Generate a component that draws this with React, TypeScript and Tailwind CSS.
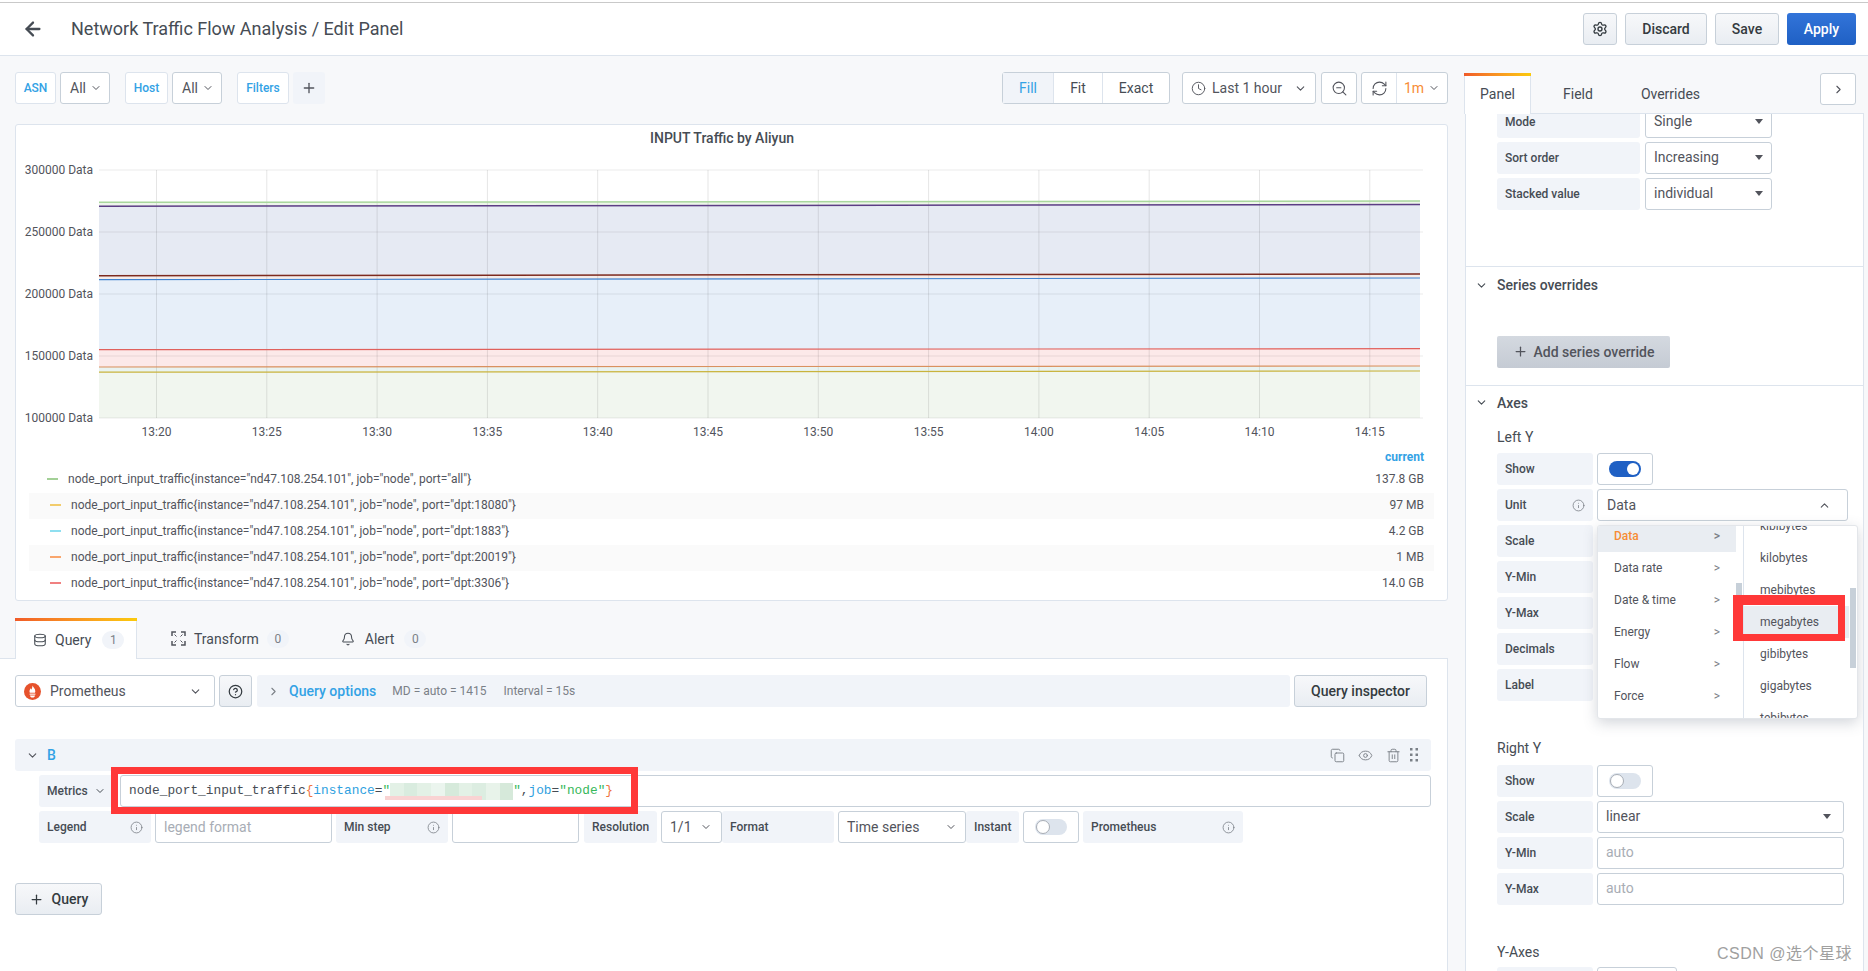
import React from 'react'
import { ArrowLeft, Settings, ChevronDown, ChevronRight, ChevronUp, Clock, ZoomOut, RefreshCw, Plus, Database, Bell, Copy, Eye, Trash2, Info, CircleHelp } from 'lucide-react'

const times = ['13:20', '13:25', '13:30', '13:35', '13:40', '13:45', '13:50', '13:55', '14:00', '14:05', '14:10', '14:15']
const ticks = [
  { y: 170, t: '300000 Data' },
  { y: 232, t: '250000 Data' },
  { y: 294, t: '200000 Data' },
  { y: 356, t: '150000 Data' },
  { y: 418, t: '100000 Data' },
]
const legend = [
  { c: 'bg-[#a3d097]', port: 'all', v: '137.8 GB' },
  { c: 'bg-[#f2cc6c]', port: 'dpt:18080', v: '97 MB' },
  { c: 'bg-[#8fdff0]', port: 'dpt:1883', v: '4.2 GB' },
  { c: 'bg-[#f9a66d]', port: 'dpt:20019', v: '1 MB' },
  { c: 'bg-[#f08080]', port: 'dpt:3306', v: '14.0 GB' },
]
const lines = [
  { a: 202.3, b: 201, c: '#a9d79d', w: 1.5 },
  { a: 206.3, b: 204.5, c: '#5c3d84', w: 1.5 },
  { a: 275.7, b: 274, c: '#7d2a1e', w: 1.5 },
  { a: 279.7, b: 278, c: '#3f82cf', w: 1.2 },
  { a: 349.7, b: 348.7, c: '#e0605c', w: 1.2 },
  { a: 367, b: 366, c: '#d9915f', w: 1.2 },
  { a: 372.2, b: 371, c: '#c9b33c', w: 1.2 },
]
const fills = [
  { a: 202.3, b: 201, a2: 206.3, b2: 204.5, c: '#edf5ea' },
  { a: 206.3, b: 204.5, a2: 275.7, b2: 274, c: '#e6eaf3' },
  { a: 275.7, b: 274, a2: 279.7, b2: 278, c: '#f5ece9' },
  { a: 279.7, b: 278, a2: 349.7, b2: 348.7, c: '#e7eff9' },
  { a: 349.7, b: 348.7, a2: 367, b2: 366, c: '#fce9e9' },
  { a: 367, b: 366, a2: 372.2, b2: 371, c: '#e9f3f1' },
  { a: 372.2, b: 371, a2: 418, b2: 418, c: '#f1f6ef' },
]
const units = [
  { t: 'Data', active: true },
  { t: 'Data rate' },
  { t: 'Date & time' },
  { t: 'Energy' },
  { t: 'Flow' },
  { t: 'Force' },
]
const sizes = ['kilobytes', 'mebibytes', 'megabytes', 'gibibytes', 'gigabytes']
const blur = ['#e3f1e6', '#d9ecdf', '#e3f1e6', '#ebf5ee', '#d6eadb', '#e3f1e6', '#dcede1', '#e8f3ea', '#d6e9da']

const Label = ({ children, className = '' }: { children: React.ReactNode; className?: string }) => (
  <div className={`h-8 flex items-center bg-[#f1f4f9] rounded-[3px] text-xs font-medium text-[#464c54] shrink-0 ${className}`}>{children}</div>
)

const Hint = () => <Info size={13} strokeWidth={1.5} className="text-[#7b8087] shrink-0" />

const Box = ({ children, className = '' }: { children?: React.ReactNode; className?: string }) => (
  <div className={`h-8 flex items-center bg-white border border-[#c7d0d9] rounded-[3px] text-sm text-[#52545c] shrink-0 ${className}`}>{children}</div>
)

const Caret = () => <span className="w-0 h-0 border-x-[4px] border-x-transparent border-t-[5px] border-t-[#52545c] ml-auto mt-px" />

const Toggle = ({ on }: { on?: boolean }) => (
  <Box className="w-14 justify-center">
    {on ? (
      <span className="w-8 h-4 rounded-full bg-[#1f60c4] flex items-center justify-end pr-[2px]">
        <span className="w-3 h-3 rounded-full bg-white" />
      </span>
    ) : (
      <span className="w-8 h-4 rounded-full bg-[#dde4ed] flex items-center">
        <span className="w-[14px] h-[14px] ml-px rounded-full bg-white border border-[#a8adb5]" />
      </span>
    )}
  </Box>
)

const GrayButton = ({ children, className = '' }: { children: React.ReactNode; className?: string }) => (
  <button className={`h-8 flex items-center justify-center rounded-[3px] border border-[#c7d0d9] bg-linear-to-b from-[#f7f8fa] to-[#e9edf2] text-sm font-medium text-[#343b40] ${className}`}>{children}</button>
)

const Chip = ({ children, className = '' }: { children: React.ReactNode; className?: string }) => (
  <div className={`h-8 flex items-center justify-center bg-white border border-[#dde4ed] rounded-[3px] text-xs font-medium text-[#33a2e5] ${className}`}>{children}</div>
)

const Row = ({ label, children, hint }: { label: string; children: React.ReactNode; hint?: boolean }) => (
  <div className="flex gap-1">
    <Label className="w-24 pl-2 pr-2 justify-between">
      <span>{label}</span>
      {hint && <Hint />}
    </Label>
    {children}
  </div>
)

const PrometheusLogo = () => (
  <svg width="17" height="17" viewBox="0 0 17 17">
    <circle cx="8.5" cy="8.5" r="8.5" fill="#e6522c" />
    <path d="M8.6 2.6c.4 1.8 2.7 2.8 2.7 5.6 0 .5-.1 1-.4 1.6H5.9c-.3-.7-.5-1.2-.4-1.9.1-1 .9-1.5 1-2.6.6.4.8 1 .9 1.5.6-1 .9-2.6 1.2-4.2z" fill="#fff" />
    <rect x="5.6" y="10.6" width="5.8" height="1.1" fill="#fff" />
    <path d="M6 12.4h5c0 1.2-1.1 2.2-2.5 2.2S6 13.6 6 12.4z" fill="#fff" />
  </svg>
)

const TransformIcon = () => (
  <svg width="15" height="15" viewBox="0 0 15 15" fill="none" stroke="#52545c" strokeWidth="1.5">
    <path d="M1 5V1h4M10 1h4v4M14 10v4h-4M5 14H1v-4" />
    <path d="M3.5 3.5l2 2M11.5 3.5l-2 2M11.5 11.5l-2-2M3.5 11.5l2-2" strokeWidth="1" />
  </svg>
)

const GripDots = () => (
  <svg width="10" height="14" viewBox="0 0 10 14" fill="#7b8087">
    <rect x="1" y="0" width="2.5" height="2.5" />
    <rect x="6.5" y="0" width="2.5" height="2.5" />
    <rect x="1" y="5.5" width="2.5" height="2.5" />
    <rect x="6.5" y="5.5" width="2.5" height="2.5" />
    <rect x="1" y="11" width="2.5" height="2.5" />
    <rect x="6.5" y="11" width="2.5" height="2.5" />
  </svg>
)

const Badge = ({ n }: { n: number }) => (
  <span className="w-[22px] h-[18px] rounded-full bg-[#f1f4f9] flex items-center justify-center text-xs text-[#7b8087]">{n}</span>
)

const Graph = () => (
  <svg width="1431" height="296" className="block">
    <g transform="translate(-16,-151)">
      {fills.map((f, i) => (
        <polygon key={i} points={`99,${f.a} 1420,${f.b} 1420,${f.b2} 99,${f.a2}`} fill={f.c} />
      ))}
      {ticks.map(t => (
        <g key={t.y}>
          <line x1="99" x2="1423" y1={t.y} y2={t.y} stroke="#000" strokeOpacity="0.08" />
          <text x="93" y={t.y + 4} textAnchor="end" fontSize="12" fill="#52545c">{t.t}</text>
        </g>
      ))}
      {times.map((t, i) => (
        <g key={t}>
          <line x1={156.5 + i * 110.3} x2={156.5 + i * 110.3} y1="170" y2="418" stroke="#000" strokeOpacity="0.1" />
          <text x={156.5 + i * 110.3} y="436" textAnchor="middle" fontSize="12" fill="#52545c">{t}</text>
        </g>
      ))}
      {lines.map((l, i) => (
        <line key={i} x1="99" x2="1420" y1={l.a} y2={l.b} stroke={l.c} strokeWidth={l.w} />
      ))}
    </g>
  </svg>
)

const UnitDropdown = () => (
  <div className="absolute left-[100px] top-9 z-10 w-[261px] h-[194px] bg-white rounded-[3px] border border-[#e3e6ea] shadow-[0_4px_14px_rgba(80,90,110,0.25)] flex overflow-hidden text-xs text-[#52545c]">
    <div className="w-[138px] shrink-0 -mt-[6px]">
      {units.map(u => (
        <div key={u.t} className={`h-8 flex items-center justify-between pl-[16px] pr-4 ${u.active ? 'bg-[#e9edf2] text-[#f78c35] font-medium' : ''}`}>
          <span>{u.t}</span>
          <span className="text-[#7b8087]">&gt;</span>
        </div>
      ))}
    </div>
    <div className="w-[8px] shrink-0 border-r border-[#dde4ed] relative">
      <div className="absolute left-0 top-[57px] w-[6px] h-[48px] bg-[#c7d0d9]" />
    </div>
    <div className="flex-1 -mt-[16px] relative">
      <div className="h-8 flex items-center pl-4">kibibytes</div>
      {sizes.map(s => (
        <div key={s} className={`h-8 flex items-center pl-4 mr-[8px] ${s === 'megabytes' ? 'bg-[#e9edf2]' : ''}`}>{s}</div>
      ))}
      <div className="h-8 flex items-center pl-4">tebibytes</div>
      <div className="absolute right-[1px] top-[78px] w-[6px] h-[80px] bg-[#c7d0d9]" />
    </div>
    <div className="absolute left-[135px] top-[69px] w-[112px] h-[46px] border-[#ff3838] border-solid border-t-[10px] border-l-[10px] border-r-[7px] border-b-[7px]" />
  </div>
)

const QueryText = () => (
  <span className="font-[family-name:'Liberation_Mono',monospace] text-[12.8px] whitespace-pre text-[#464c54] flex items-center">
    node_port_input_traffic<span className="text-[#f0743e]">{'{'}</span>
    <span className="text-[#2f9fe0]">instance</span>=<span className="text-[#36b85a]">"</span>
    <span className="relative inline-flex w-[123px] h-[17px]">
      {blur.map((c, i) => (
        <span key={i} className="flex-1" style={{ backgroundColor: c }} />
      ))}
      <span className="absolute -left-[5px] bottom-0 w-[97px] h-[4px] bg-[#f9d3d3]" />
    </span>
    <span className="text-[#36b85a]">"</span>,<span className="text-[#2f9fe0]">job</span>=<span className="text-[#36b85a]">"node"</span>
    <span className="text-[#f0743e]">{'}'}</span>
  </span>
)

const App = () => {
  return (
    <div className="relative h-[971px] overflow-hidden bg-[#f7f8fa] font-[family-name:Roboto,sans-serif] text-[#52545c]">
      <header className="bg-white pt-[2px] border-b border-[#dde4ed]">
        <div className="h-[53px] border-t border-[#c9c9c9] flex items-center pl-[22px] pr-3">
          <ArrowLeft size={22} strokeWidth={2.5} className="text-[#464c54]" />
          <h1 className="ml-[27px] text-lg text-[#464c54]">Network Traffic Flow Analysis / Edit Panel</h1>
          <div className="ml-auto flex gap-2">
            <GrayButton className="w-[34px]"><Settings size={16} /></GrayButton>
            <GrayButton className="w-[82px]">Discard</GrayButton>
            <GrayButton className="w-[64px]">Save</GrayButton>
            <button className="w-[69px] h-8 rounded-[3px] bg-linear-to-b from-[#3274d9] to-[#1f60c4] text-sm font-medium text-white">Apply</button>
          </div>
        </div>
      </header>

      <div className="flex">
        <div className="w-[1465px] shrink-0">
          <div className="pl-[15px] pr-[17px]">
            <div className="pt-4 flex items-center">
              <Chip className="w-[41px]">ASN</Chip>
              <Box className="ml-1 w-[50px] pl-[9px] gap-1">All <ChevronDown size={12} /></Box>
              <Chip className="ml-[15px] w-[43px]">Host</Chip>
              <Box className="ml-1 w-[50px] pl-[9px] gap-1">All <ChevronDown size={12} /></Box>
              <Chip className="ml-[15px] w-[52px]">Filters</Chip>
              <div className="ml-1 w-8 h-8 flex items-center justify-center bg-[#f1f4f9] rounded-[3px]"><Plus size={16} /></div>

              <div className="ml-auto flex h-8 items-center border border-[#c7d0d9] rounded-[3px] bg-white text-sm text-[#464c54]">
                <span className="w-[51px] h-full flex items-center justify-center bg-[#f1f4f9] text-[#33a2e5] border-r border-[#dde4ed]">Fill</span>
                <span className="w-[49px] h-full flex items-center justify-center border-r border-[#dde4ed]">Fit</span>
                <span className="w-[66px] h-full flex items-center justify-center">Exact</span>
              </div>
              <Box className="ml-3 w-[134px] pl-2 gap-[6px] text-[#7b8087]"><Clock size={15} strokeWidth={1.5} /> Last 1 hour <ChevronDown size={13} className="ml-auto mr-2" /></Box>
              <Box className="ml-[5px] w-9 justify-center"><ZoomOut size={17} strokeWidth={1.5} /></Box>
              <div className="ml-1 flex h-8 items-center border border-[#c7d0d9] rounded-[3px] bg-white">
                <span className="w-[35px] h-full flex items-center justify-center border-r border-[#dde4ed]"><RefreshCw size={17} strokeWidth={1.5} /></span>
                <span className="w-[50px] flex items-center justify-center gap-1 text-sm text-[#f78c35]">1m <ChevronDown size={12} className="text-[#52545c]" /></span>
              </div>
            </div>

            <section className="mt-5 h-[477px] bg-white border border-[#dde4ed] rounded-[3px]">
              <div className="h-[26px] pr-[19px] flex items-center justify-center text-sm font-medium text-[#464c54]">INPUT Traffic by Aliyun</div>
              <Graph />
              <div className="ml-[13px] mr-[13px]">
                <div className="h-5 pr-[10px] text-right text-xs font-bold text-[#33a2e5] leading-5">current</div>
                {legend.map((l, i) => (
                  <div key={l.port} className={`h-[26px] flex items-center pr-[10px] pb-[2px] text-xs text-[#52545c] ${i % 2 ? 'bg-[#fafafa]' : ''} ${i === 0 ? 'pl-[18px] gap-[10px]' : 'pl-[21px] gap-[10px]'}`}>
                    <span className={`w-[11px] h-[2px] ${l.c}`} />
                    <span>node_port_input_traffic{'{'}instance="nd47.108.254.101", job="node", port="{l.port}"{'}'}</span>
                    <span className="ml-auto">{l.v}</span>
                  </div>
                ))}
              </div>
            </section>

            <div className="mt-[17px] flex items-stretch h-[41px] -mb-px relative z-10">
              <div className="w-[122px] h-[41px] bg-white border-x border-[#dde4ed] flex flex-col">
                <div className="h-[3px] -mx-px bg-linear-to-r from-[#f05a28] to-[#fbca0a]" />
                <div className="flex-1 flex items-center pl-[17px] gap-[8px] text-sm text-[#464c54]">
                  <Database size={14} strokeWidth={1.8} /> <span>Query</span> <span className="ml-[3px]"><Badge n={1} /></span>
                </div>
              </div>
              <div className="ml-[34px] flex items-center gap-[8px] text-sm text-[#464c54]">
                <TransformIcon /> <span>Transform</span> <Badge n={0} />
              </div>
              <div className="ml-[52px] flex items-center gap-[10px] text-sm text-[#464c54]">
                <Bell size={14} strokeWidth={1.8} /> <span>Alert</span> <Badge n={0} />
              </div>
            </div>
          </div>

          <section className="w-[1448px] h-[320px] bg-white border-t border-r border-[#dde4ed] pl-[15px] pr-[20px] pt-4">
            <div className="flex gap-1">
              <Box className="w-[200px] pl-2 pr-3 gap-[9px]"><PrometheusLogo /> Prometheus <ChevronDown size={13} className="ml-auto" /></Box>
              <GrayButton className="w-[33px]"><CircleHelp size={15} /></GrayButton>
              <div className="ml-px flex-1 h-8 flex items-center bg-[#f1f4f9] rounded-[3px] pl-[10px] text-xs text-[#7b8087]">
                <ChevronRight size={13} />
                <span className="ml-[9px] text-sm font-medium text-[#33a2e5]">Query options</span>
                <span className="ml-4">MD = auto = 1415</span>
                <span className="ml-[17px]">Interval = 15s</span>
              </div>
              <GrayButton className="w-[133px]">Query inspector</GrayButton>
            </div>

            <div className="mt-8 w-[1416px] h-8 flex items-center bg-[#f1f4f9] rounded-[3px] pl-[11px] pr-3">
              <ChevronDown size={13} />
              <span className="ml-2 text-sm font-medium text-[#33a2e5]">B</span>
              <div className="ml-auto flex items-center gap-[13px] text-[#7b8087]">
                <Copy size={15} strokeWidth={1.5} />
                <Eye size={15} strokeWidth={1.5} />
                <Trash2 size={15} strokeWidth={1.5} />
                <span className="-ml-[5px]"><GripDots /></span>
              </div>
            </div>

            <div className="mt-1 ml-[24px] w-[1392px] flex">
              <Label className="w-[79px] pl-2 gap-[6px]">Metrics <ChevronDown size={12} /></Label>
              <div className="relative ml-[2px] flex-1">
                <Box className="pl-[8px]"><QueryText /></Box>
                <div className="absolute -left-[9px] -top-2 w-[527px] h-[47px] border-[7px] border-[#ff3838] pointer-events-none" />
              </div>
            </div>

            <div className="mt-1 ml-[24px] flex items-center">
              <Label className="w-[112px] px-2 justify-between">Legend <Hint /></Label>
              <Box className="ml-1 w-[177px] pl-2 text-[#a8adb5]">legend format</Box>
              <Label className="ml-1 w-[112px] px-2 justify-between">Min step <Hint /></Label>
              <Box className="ml-1 w-[127px]" />
              <Label className="ml-[5px] w-[73px] px-2">Resolution</Label>
              <Box className="ml-1 w-[61px] pl-2 gap-2">1/1 <ChevronDown size={12} /></Box>
              <Label className="w-[112px] px-2">Format</Label>
              <Box className="ml-1 w-[128px] pl-2 pr-2">Time series <ChevronDown size={12} className="ml-auto" /></Box>
              <Label className="w-[53px] px-2">Instant</Label>
              <div className="ml-1"><Toggle /></div>
              <Label className="ml-1 w-[160px] px-2 justify-between">Prometheus <Hint /></Label>
            </div>

            <GrayButton className="mt-10 w-[87px] gap-2 text-[#343b40]"><Plus size={15} /> Query</GrayButton>
          </section>
        </div>

        <aside className="w-[399px] shrink-0">
          <div className="pt-[17px] h-[58px] flex items-start border-b border-[#dde4ed] -ml-px">
            <div className="w-[67px] h-[41px] bg-white border-x border-[#dde4ed] relative z-10 flex flex-col">
              <div className="h-[3px] -mx-px bg-linear-to-r from-[#f05a28] to-[#fbca0a]" />
              <div className="flex-1 flex items-center justify-center pb-[2px] text-sm text-[#464c54]">Panel</div>
            </div>
            <span className="ml-[32px] mt-[11px] text-sm text-[#464c54]">Field</span>
            <span className="ml-[48px] mt-[11px] text-sm text-[#464c54]">Overrides</span>
            <div className="ml-auto mr-2 w-9 h-8 flex items-center justify-center bg-white border border-[#c7d0d9] rounded-[3px]"><ChevronRight size={13} /></div>
          </div>

          <div className="h-[857px] overflow-hidden bg-white border-x border-[#dde4ed]">
            <div className="-mt-2 pl-[31px] flex flex-col gap-1 h-[160px]">
              {['Single', 'Increasing', 'individual'].map((v, i) => (
                <div key={v} className="flex gap-[5px]">
                  <Label className="w-[143px] pl-2">{['Mode', 'Sort order', 'Stacked value'][i]}</Label>
                  <Box className="w-[127px] pl-2 pr-2 pb-[2px]">{v}<Caret /></Box>
                </div>
              ))}
            </div>

            <div className="border-t border-[#dde4ed] h-[119px]">
              <div className="pl-[9px] flex items-center text-sm font-medium text-[#464c54] h-9">
                <ChevronDown size={13} />
                <span className="ml-[9px]">Series overrides</span>
              </div>
              <button className="ml-[31px] mt-[33px] w-[173px] h-8 rounded-[2px] flex items-center justify-center gap-[6px] pb-px bg-linear-to-b from-[#d4d9e0] to-[#c5cbd4] text-sm font-medium text-[#52545c]"><Plus size={15} /> Add series override</button>
            </div>

            <div className="border-t border-[#dde4ed] pl-[9px] pb-[2px] h-9 flex items-center text-sm font-medium text-[#464c54]">
              <ChevronDown size={13} />
              <span className="ml-[9px]">Axes</span>
            </div>

            <div className="pl-[31px]">
              <div className="text-sm text-[#464c54] h-8 pt-[6px]">Left Y</div>
              <div className="flex flex-col gap-1 relative">
                <Row label="Show"><Toggle on /></Row>
                <div className="relative">
                  <Row label="Unit" hint>
                    <Box className="w-[251px] pl-[9px] pr-4 text-[#464c54]">Data <ChevronUp size={13} className="ml-auto" /></Box>
                  </Row>
                  <UnitDropdown />
                </div>
                {['Scale', 'Y-Min', 'Y-Max', 'Decimals', 'Label'].map(t => (
                  <Row key={t} label={t}><span /></Row>
                ))}
              </div>

              <div className="mt-[37px] text-sm text-[#464c54] h-[27px]">Right Y</div>
              <div className="flex flex-col gap-1">
                <Row label="Show"><Toggle /></Row>
                <Row label="Scale"><Box className="w-[247px] pl-2 pr-3 pb-[2px]">linear<Caret /></Box></Row>
                <Row label="Y-Min"><Box className="w-[247px] pl-2 pb-[2px] text-[#a8adb5]">auto</Box></Row>
                <Row label="Y-Max"><Box className="w-[247px] pl-2 pb-[2px] text-[#a8adb5]">auto</Box></Row>
              </div>

              <div className="mt-[37px] text-sm text-[#464c54] h-[25px]">Y-Axes</div>
              <Row label=""><Box className="w-20" /></Row>
            </div>
          </div>
        </aside>
      </div>

      <div className="absolute left-[1717px] top-[942px] text-base text-[#a0a0a0] font-[family-name:'Liberation_Sans','Noto_Sans_CJK_SC',sans-serif] [text-shadow:0_0_2px_#fff] tracking-[0.5px]">CSDN @选个星球</div>
    </div>
  )
}

export default App
